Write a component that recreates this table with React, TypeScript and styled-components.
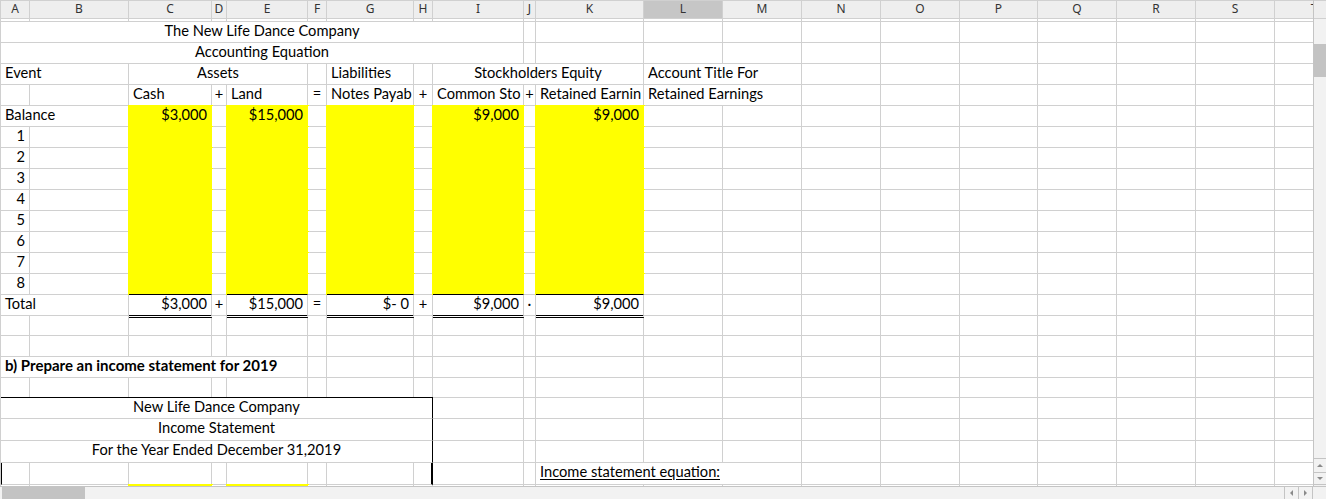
import React from 'react';
import styled, { createGlobalStyle, css } from 'styled-components';

const GRID = '#d0d0d0';
const COLS = [29, 99, 83, 15, 81, 19, 87, 19, 91, 12, 108, 79, 79, 79, 79, 78, 79, 79, 79, 79];
const LETTERS = 'ABCDEFGHIJKLMNOPQRST'.split('');
const TEMPLATE = COLS.map((w) => `${w}px`).join(' ');

type Align = 'left' | 'center' | 'right';
type Spec = {
  span?: number;
  text?: string;
  align?: Align;
  sign?: boolean;
  fill?: boolean;
  bold?: boolean;
  underline?: boolean;
  total?: boolean;
  boxTop?: boolean;
  boxRight?: number;
  boxLeft?: boolean;
};
type RowDef = { height: number; cells: Record<number, Spec> };

const FILL_COLS = [2, 4, 6, 8, 10];
const fillRow = (extra: Record<number, Spec> = {}): Record<number, Spec> => {
  const cells: Record<number, Spec> = {};
  FILL_COLS.forEach((c) => (cells[c] = { fill: true }));
  Object.entries(extra).forEach(([k, v]) => {
    const c = Number(k);
    cells[c] = { ...(cells[c] || {}), ...v };
  });
  return cells;
};

const box = (text: string): Record<number, Spec> => ({
  0: { span: 8, text, align: 'center', boxRight: 1 },
});

const ROWS: RowDef[] = [
  { height: 3, cells: {} },
  { height: 21, cells: { 0: { span: 9, text: 'The New Life Dance Company', align: 'center' } } },
  { height: 21, cells: { 0: { span: 9, text: 'Accounting Equation', align: 'center' } } },
  {
    height: 21,
    cells: {
      0: { span: 2, text: 'Event' },
      2: { span: 3, text: 'Assets', align: 'center' },
      6: { text: 'Liabilities' },
      8: { span: 3, text: 'Stockholders Equity', align: 'center' },
      11: { span: 2, text: 'Account Title For' },
    },
  },
  {
    height: 21,
    cells: {
      2: { text: 'Cash' },
      3: { text: '+', sign: true },
      4: { text: 'Land' },
      5: { text: '=', sign: true },
      6: { text: 'Notes Payab' },
      7: { text: '+', sign: true },
      8: { text: 'Common Sto' },
      9: { text: '+', sign: true },
      10: { text: 'Retained Earnin' },
      11: { span: 2, text: 'Retained Earnings' },
    },
  },
  {
    height: 21,
    cells: fillRow({
      0: { span: 2, text: 'Balance' },
      2: { text: '$3,000', align: 'right' },
      4: { text: '$15,000', align: 'right' },
      8: { text: '$9,000', align: 'right' },
      10: { text: '$9,000', align: 'right' },
    }),
  },
  ...[1, 2, 3, 4, 5, 6, 7, 8].map((n) => ({
    height: 21,
    cells: fillRow({ 0: { text: String(n), align: 'right' as Align } }),
  })),
  {
    height: 21,
    cells: {
      0: { span: 2, text: 'Total' },
      2: { text: '$3,000', align: 'right', total: true },
      3: { text: '+', sign: true },
      4: { text: '$15,000', align: 'right', total: true },
      5: { text: '=', sign: true },
      6: { text: '$-\u00a00', align: 'right', total: true },
      7: { text: '+', sign: true },
      8: { text: '$9,000', align: 'right', total: true },
      9: { text: '·', sign: true },
      10: { text: '$9,000', align: 'right', total: true },
    },
  },
  { height: 20, cells: {} },
  { height: 21, cells: {} },
  { height: 21, cells: { 0: { span: 5, text: 'b) Prepare an income statement for 2019', bold: true } } },
  { height: 20, cells: {} },
  { height: 21, cells: { 0: { span: 8, text: 'New Life Dance Company', align: 'center', boxRight: 1, boxTop: true } } },
  { height: 22, cells: box('Income Statement') },
  { height: 22, cells: box('For the Year Ended December 31,2019') },
  {
    height: 22,
    cells: {
      0: { boxLeft: true },
      7: { boxRight: 2 },
      10: { span: 3, text: 'Income statement equation:', underline: true },
    },
  },
  { height: 22, cells: { 2: { fill: true }, 4: { fill: true } } },
];

const expand = (cells: Record<number, Spec>): Spec[] => {
  const out: Spec[] = [];
  let c = 0;
  while (c < COLS.length) {
    const s = cells[c];
    if (s) {
      out.push(s);
      c += s.span ?? 1;
    } else {
      out.push({});
      c += 1;
    }
  }
  return out;
};

const GlobalStyle = createGlobalStyle`
  html, body { margin: 0; padding: 0; background: #ffffff; }
  body { font-family: Lato, 'Noto Sans', sans-serif; }
  * { box-sizing: border-box; }
`;

const Window = styled.div`
  width: 1326px;
  height: 499px;
  overflow: hidden;
  display: flex;
  flex-direction: column;
  background: #ffffff;
`;

const Upper = styled.div`
  display: flex;
  height: 486px;
  flex: none;
`;

const Main = styled.div`
  width: 1313px;
  flex: none;
  display: flex;
  flex-direction: column;
  overflow: hidden;
`;

const ColumnHeader = styled.div`
  display: grid;
  grid-template-columns: ${TEMPLATE};
  height: 19px;
  flex: none;
  border-top: 1px solid ${GRID};
  border-bottom: 1px solid ${GRID};
  border-left: 1px solid ${GRID};
  background: #eeeeee;
`;

const HeaderCell = styled.div<{ $selected?: boolean }>`
  border-right: 1px solid ${GRID};
  background: ${(p) => (p.$selected ? '#c6c6c6' : '#eeeeee')};
  font: 12px/15px 'Noto Sans', 'DejaVu Sans', sans-serif;
  color: #333333;
  text-align: center;
  white-space: nowrap;
  overflow: hidden;
`;

const Viewport = styled.div`
  flex: 1;
  min-height: 0;
  overflow: hidden;
`;

const Sheet = styled.div<{ $rows: string }>`
  display: grid;
  grid-template-columns: ${TEMPLATE};
  grid-template-rows: ${(p) => p.$rows};
  width: max-content;
  border-left: 1px solid ${GRID};
`;

const Cell = styled.div<{
  $span: number;
  $align: Align;
  $sign?: boolean;
  $fill?: boolean;
  $bold?: boolean;
  $underline?: boolean;
  $total?: boolean;
  $boxTop?: boolean;
  $boxRight?: number;
  $boxLeft?: boolean;
}>`
  grid-column: span ${(p) => p.$span};
  min-width: 0;
  overflow: hidden;
  white-space: nowrap;
  background: #ffffff;
  border-right: 1px solid ${GRID};
  border-bottom: 1px solid ${GRID};
  padding: 0 ${(p) => (p.$sign ? '0' : '4px')};
  font-family: Lato, 'Noto Sans', sans-serif;
  font-size: ${(p) => (p.$bold ? '15px' : '14.67px')};
  line-height: 17px;
  font-weight: ${(p) => (p.$bold ? 700 : 400)};
  text-decoration: ${(p) => (p.$underline ? 'underline' : 'none')};
  text-underline-offset: 2px;
  color: #000000;
  text-align: ${(p) => (p.$sign ? 'center' : p.$align)};
  ${(p) =>
    p.$fill &&
    css`
      background: #ffff00;
      border-right-color: #ffff00;
      border-bottom-color: #ffff00;
      box-shadow: 0 0 0 1px #ffff00;
    `}
  ${(p) =>
    p.$total &&
    css`
      position: relative;
      z-index: 1;
      margin-top: -1px;
      margin-bottom: -2px;
      border-top: 1px solid #000000;
      border-bottom: 3px double #000000;
    `}
  ${(p) =>
    p.$boxTop &&
    css`
      position: relative;
      z-index: 1;
      margin-top: -1px;
      border-top: 1px solid #000000;
    `}
  ${(p) =>
    p.$boxRight &&
    css`
      border-right: ${p.$boxRight}px solid #000000;
    `}
  ${(p) =>
    p.$boxLeft &&
    css`
      border-left: 1px solid #000000;
    `}
`;

const VScroll = styled.div`
  width: 13px;
  flex: none;
  display: flex;
  flex-direction: column;
  background: #f2f2f2;
  border-left: 1px solid #c4c4c4;
`;

const Corner = styled.div`
  height: 19px;
  flex: none;
  background: #eeeeee;
  border-top: 1px solid ${GRID};
  border-bottom: 1px solid ${GRID};
`;

const VThumb = styled.div`
  margin-top: 25px;
  height: 33px;
  flex: none;
  background: #c3c3c3;
`;

const Spacer = styled.div`
  flex: 1;
`;

const ArrowButton = styled.div<{ $h: number }>`
  height: ${(p) => p.$h}px;
  flex: none;
  display: flex;
  align-items: center;
  justify-content: center;
  border-top: 1px solid #c4c4c4;
  background: #f2f2f2;
`;

const VEnd = styled.div`
  height: 2px;
  flex: none;
  border-top: 1px solid #c4c4c4;
`;

const HScroll = styled.div`
  height: 13px;
  flex: none;
  display: flex;
  align-items: stretch;
  background: #f2f2f2;
  border-top: 1px solid #c4c4c4;
`;

const HThumb = styled.div`
  margin-left: 2px;
  width: 83px;
  flex: none;
  background: #c3c3c3;
`;

const HButton = styled.div`
  width: 14px;
  flex: none;
  display: flex;
  align-items: center;
  justify-content: center;
  border-left: 1px solid #c4c4c4;
`;

const HEnd = styled.div`
  width: 14px;
  flex: none;
  border-left: 1px solid #c4c4c4;
`;

const Tri = ({ dir }: { dir: 'up' | 'down' | 'left' | 'right' }) => {
  const pts = {
    up: '0,4 3,1 6,4',
    down: '0,1 3,4 6,1',
    left: '4,0 1,3 4,6',
    right: '1,0 4,3 1,6',
  }[dir];
  const vertical = dir === 'up' || dir === 'down';
  return (
    <svg width={vertical ? 6 : 5} height={vertical ? 5 : 6} viewBox={vertical ? '0 0 6 5' : '0 0 5 6'}>
      <polygon points={pts} fill="#8a8a8a" />
    </svg>
  );
};

export default function App() {
  const rowTemplate = ROWS.map((r) => `${r.height}px`).join(' ');
  return (
    <>
      <GlobalStyle />
      <Window>
        <Upper>
          <Main>
            <ColumnHeader>
              {LETTERS.map((l) => (
                <HeaderCell key={l} $selected={l === 'L'}>
                  {l}
                </HeaderCell>
              ))}
            </ColumnHeader>
            <Viewport>
              <Sheet $rows={rowTemplate}>
                {ROWS.map((row, ri) =>
                  expand(row.cells).map((s, ci) => (
                    <Cell
                      key={`${ri}-${ci}`}
                      $span={s.span ?? 1}
                      $align={s.align ?? 'left'}
                      $sign={s.sign}
                      $fill={s.fill}
                      $bold={s.bold}
                      $underline={s.underline}
                      $total={s.total}
                      $boxTop={s.boxTop}
                      $boxRight={s.boxRight}
                      $boxLeft={s.boxLeft}
                    >
                      {s.text}
                    </Cell>
                  ))
                )}
              </Sheet>
            </Viewport>
          </Main>
          <VScroll>
            <Corner />
            <VThumb />
            <Spacer />
            <ArrowButton $h={14}>
              <Tri dir="up" />
            </ArrowButton>
            <ArrowButton $h={12}>
              <Tri dir="down" />
            </ArrowButton>
            <VEnd />
          </VScroll>
        </Upper>
        <HScroll>
          <HThumb />
          <Spacer />
          <HButton>
            <Tri dir="left" />
          </HButton>
          <HButton>
            <Tri dir="right" />
          </HButton>
          <HEnd />
        </HScroll>
      </Window>
    </>
  );
}
